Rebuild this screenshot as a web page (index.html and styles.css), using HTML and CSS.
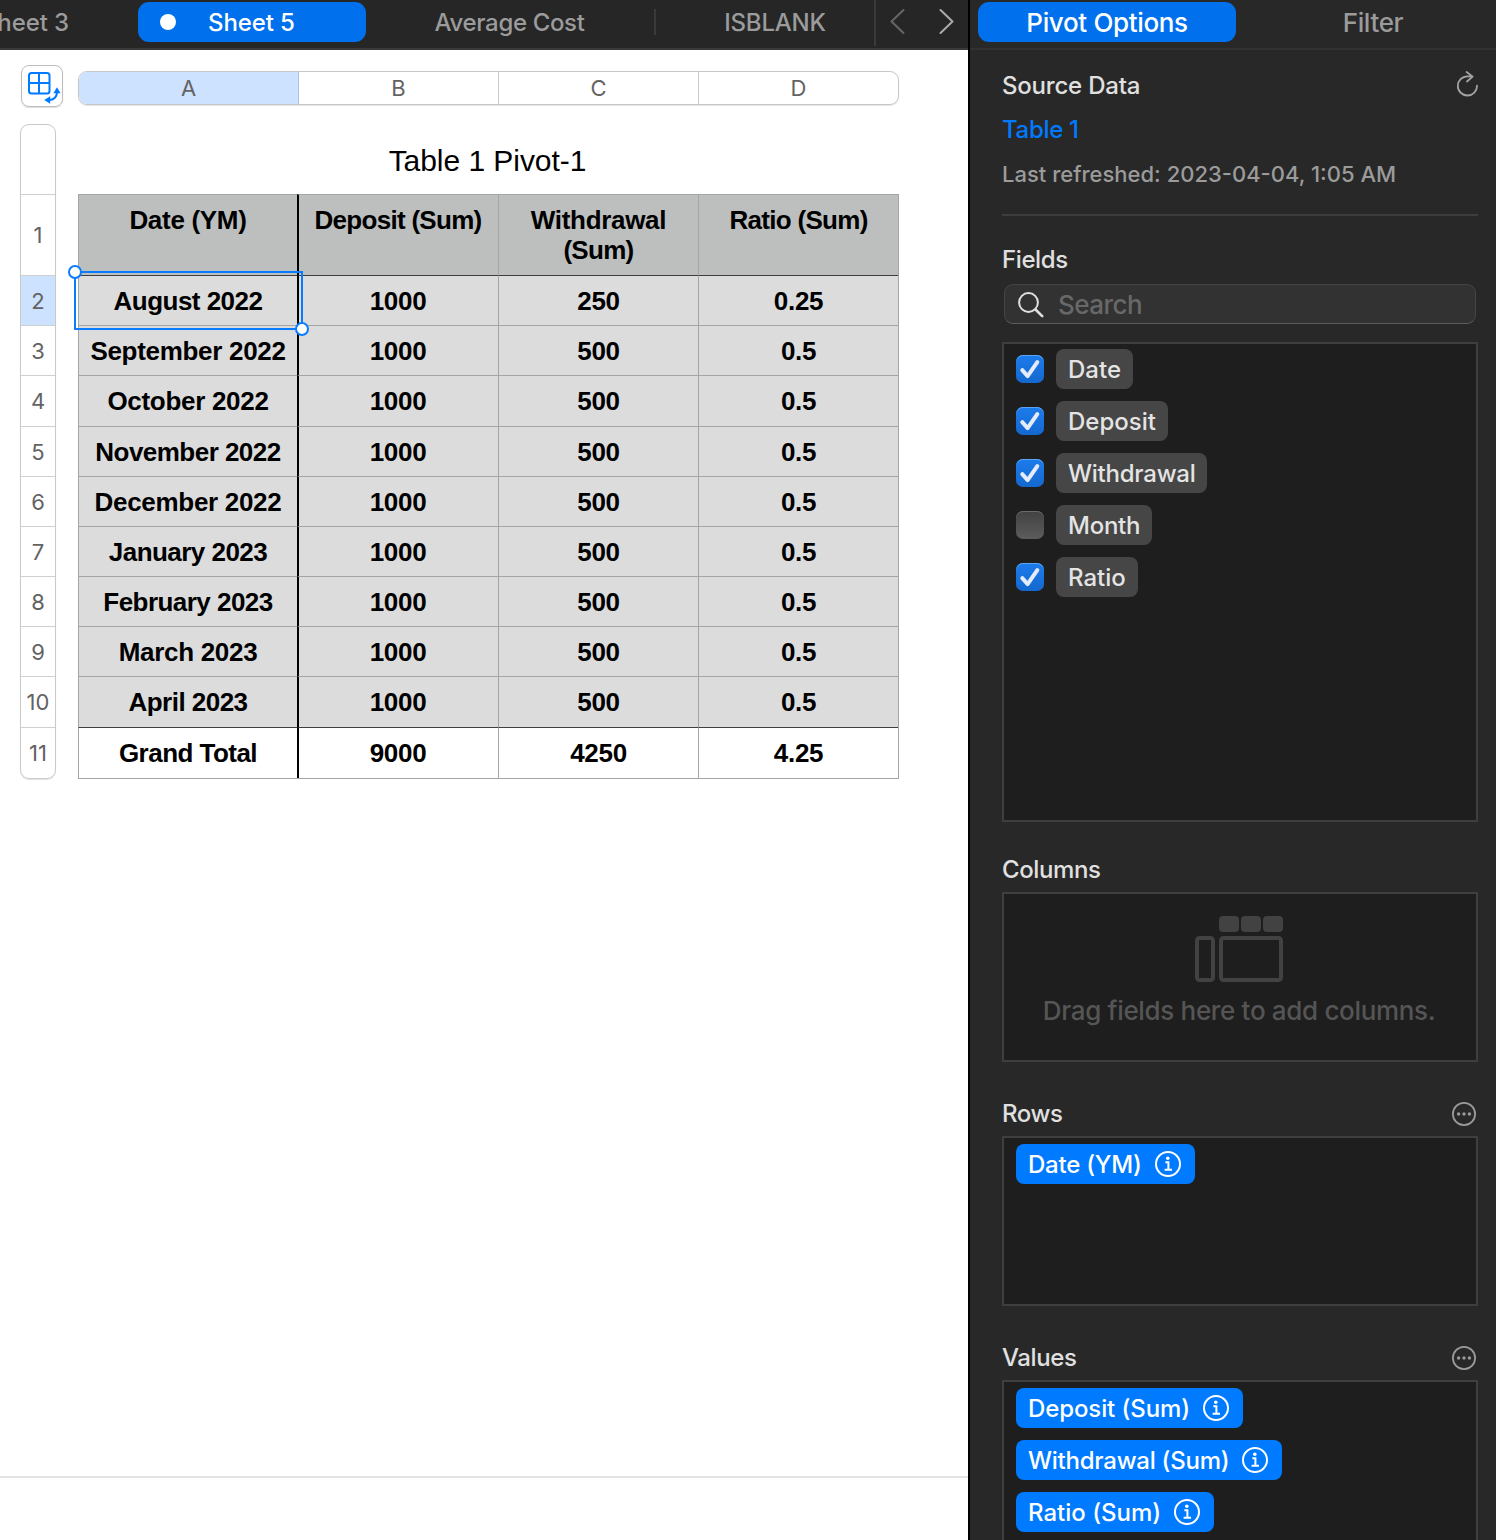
FILE: index.html
```html
<!DOCTYPE html>
<html lang="en">
<head>
<meta charset="utf-8">
<title>Pivot table</title>
<link rel="stylesheet" href="styles.css">
</head>
<body>
<svg class="defs" width="0" height="0">
  <symbol id="info" viewBox="0 0 26 26">
    <circle cx="13" cy="13" r="12" fill="none" stroke="#fff" stroke-width="2"/>
    <circle cx="12.8" cy="7.2" r="1.8" fill="#fff"/>
    <path d="M10.4 11.3h3v7.4M9.6 18.8h7.4" fill="none" stroke="#fff" stroke-width="2"/>
  </symbol>
  <symbol id="more" viewBox="0 0 24 24">
    <circle cx="12" cy="12" r="11.1" fill="none" stroke="#9b9b9b" stroke-width="1.8"/>
    <g fill="#9b9b9b"><circle cx="6.6" cy="12" r="1.7"/><circle cx="12" cy="12" r="1.7"/><circle cx="17.4" cy="12" r="1.7"/></g>
  </symbol>
  <symbol id="check" viewBox="0 0 28 28">
    <path d="M6.3 15.2l5.3 5.9L21.3 7.2" fill="none" stroke="#e4ecfb" stroke-width="4" stroke-linecap="round" stroke-linejoin="round"/>
  </symbol>
</svg>
<div class="app">
  <main class="document">
    <nav class="tabs">
      <div class="tab tab-first"><span>Sheet 3</span></div>
      <div class="tab tab-active"><i class="dot"></i><span>Sheet 5</span></div>
      <div class="tab tab-cost"><span>Average Cost</span></div>
      <div class="tab tab-blank"><span>ISBLANK</span></div>
      <div class="arrows">
        <svg width="92" height="46" viewBox="0 0 92 46" fill="none" stroke-width="2" stroke-linecap="round" stroke-linejoin="round"><path d="M27.5 10L15.5 21.5l12 11.5" stroke="#666"/><path d="M64.5 10l12 11.5L64.500 33" stroke="#aaa"/></svg>
      </div>
    </nav>
    <div class="canvas">
      <div class="col-head-row">
        <div class="pivot-btn">
          <svg width="42" height="42" viewBox="0 0 42 42" fill="none" stroke="#007aff" stroke-width="2">
            <rect x="8" y="8" width="20.5" height="20.5" rx="2.5"/><path d="M18 8v20M8 18h20.5"/>
            <path d="M36 27c0 4.500-3 8-8 8"/>
            <path d="M32.400 28.300l3.600-6 3.600 6zM29.200 31.300l-6 3.700 6 3.700z" fill="#007aff" stroke="none"/>
          </svg>
        </div>
        <div class="col-head">
          <div class="selected">A</div><div>B</div><div>C</div><div>D</div>
        </div>
      </div>
      <div class="sheet-row">
        <div class="row-head">
          <div></div><div>1</div><div class="selected">2</div><div>3</div><div>4</div><div>5</div><div>6</div><div>7</div><div>8</div><div>9</div><div>10</div><div>11</div>
        </div>
        <div class="pivot">
          <h1>Table 1 Pivot-1</h1>
          <div class="grid">
            <div class="row head"><b>Date (YM)</b><b class="tighter">Deposit (Sum)</b><b><span>Withdrawal<br><span class="tighter">(Sum)</span></span></b><b class="tighter">Ratio (Sum)</b></div>
            <div class="row first"><b class="tight">August 2022</b><b>1000</b><b>250</b><b>0.25</b></div>
            <div class="row"><b>September 2022</b><b>1000</b><b>500</b><b>0.5</b></div>
            <div class="row"><b>October 2022</b><b>1000</b><b>500</b><b>0.5</b></div>
            <div class="row"><b class="tight">November 2022</b><b>1000</b><b>500</b><b>0.5</b></div>
            <div class="row"><b>December 2022</b><b>1000</b><b>500</b><b>0.5</b></div>
            <div class="row"><b class="tight">January 2023</b><b>1000</b><b>500</b><b>0.5</b></div>
            <div class="row"><b class="tight">February 2023</b><b>1000</b><b>500</b><b>0.5</b></div>
            <div class="row"><b>March 2023</b><b>1000</b><b>500</b><b>0.5</b></div>
            <div class="row"><b class="tight">April 2023</b><b>1000</b><b>500</b><b>0.5</b></div>
            <div class="row total"><b class="tight">Grand Total</b><b>9000</b><b>4250</b><b>4.25</b></div>
            <div class="selection"><i class="handle start"></i><i class="handle end"></i></div>
          </div>
        </div>
      </div>
    </div>
    <div class="footer"></div>
  </main>
  <aside class="inspector">
    <nav class="modes">
      <div class="mode active">Pivot Options</div>
      <div class="mode">Filter</div>
    </nav>
    <div class="panel">
      <section class="source">
        <div class="heading"><span>Source Data</span>
          <svg width="24" height="28" viewBox="0 0 24 28" fill="none" stroke="#a3a3a3" stroke-width="1.8" stroke-linecap="round" stroke-linejoin="round"><path d="M23 14.700A9.600 9.600 0 1 1 13.400 5.300H18.600M12.600 1l6 4.600-5.600 4.900"/></svg>
        </div>
        <div class="link">Table 1</div>
        <div class="note">Last refreshed: 2023-04-04, 1:05 AM</div>
      </section>
      <section class="fields">
        <div class="heading"><span>Fields</span></div>
        <div class="search">
          <svg width="26" height="26" viewBox="0 0 26 26" fill="none" stroke="#e0e0e0" stroke-linecap="round"><circle cx="10.5" cy="10.5" r="9.400" stroke-width="2"/><path d="M17.500 17.500l6.700 6.700" stroke-width="2.600"/></svg>
          <span>Search</span>
        </div>
        <div class="box field-list">
          <div class="field"><i class="checkbox on"><svg width="28" height="28"><use href="#check"/></svg></i><div class="chip"><span>Date</span></div></div>
          <div class="field"><i class="checkbox on"><svg width="28" height="28"><use href="#check"/></svg></i><div class="chip"><span>Deposit</span></div></div>
          <div class="field"><i class="checkbox on"><svg width="28" height="28"><use href="#check"/></svg></i><div class="chip narrow"><span>Withdrawal</span></div></div>
          <div class="field"><i class="checkbox"></i><div class="chip narrow"><span>Month</span></div></div>
          <div class="field"><i class="checkbox on"><svg width="28" height="28"><use href="#check"/></svg></i><div class="chip"><span>Ratio</span></div></div>
        </div>
      </section>
      <section class="group">
        <div class="heading"><span>Columns</span></div>
        <div class="box empty">
          <svg width="88" height="66" viewBox="0 0 88 66"><g fill="#424242"><rect x="24" width="20" height="16" rx="4"/><rect x="46" width="20" height="16" rx="4"/><rect x="68" width="20" height="16" rx="4"/></g><g fill="none" stroke="#424242" stroke-width="4"><rect x="2" y="22" width="16" height="42" rx="2.500"/><rect x="26" y="22" width="60" height="42" rx="2.500"/></g></svg>
          <span>Drag fields here to add columns.</span>
        </div>
      </section>
      <section class="group">
        <div class="heading"><span>Rows</span><svg class="more" width="24" height="24"><use href="#more"/></svg></div>
        <div class="box">
          <div class="chip blue narrow"><span>Date (YM)</span><svg width="26" height="26"><use href="#info"/></svg></div>
        </div>
      </section>
      <section class="group">
        <div class="heading"><span>Values</span><svg class="more" width="24" height="24"><use href="#more"/></svg></div>
        <div class="box">
          <div class="chip blue slim"><span>Deposit (Sum)</span><svg width="26" height="26"><use href="#info"/></svg></div>
          <div class="chip blue narrow"><span>Withdrawal (Sum)</span><svg width="26" height="26"><use href="#info"/></svg></div>
          <div class="chip blue"><span>Ratio (Sum)</span><svg width="26" height="26"><use href="#info"/></svg></div>
        </div>
      </section>
    </div>
  </aside>
</div>
</body>
</html>
```
FILE: styles.css
```css
* { box-sizing: border-box; }
body { margin: 0; background: #fff; font-family: Inter, "Liberation Sans", sans-serif; }
.defs { position: absolute; }
.app { display: flex; width: 1496px; height: 1540px; overflow: hidden; }
svg { display: block; flex: none; }
span { white-space: nowrap; }

/* Document side */
.document { width: 968px; display: flex; flex-direction: column; overflow: hidden; }
.tabs { display: flex; height: 50px; background: #262626; border-bottom: 2px solid #3a393b; color: #9b9b9b; font-size: 24px; font-weight: 500; line-height: 42px; padding-top: 2px; letter-spacing: -0.1px; }
.tab { display: flex; justify-content: center; height: 40px; }
.tab-first { width: 138px; justify-content: flex-end; padding-right: 69px; }
.tab-active { width: 228px; background: #0070ec; color: #fff; border-radius: 11px; justify-content: flex-start; padding-left: 22px; gap: 32px; }
.dot { width: 16px; height: 16px; margin-top: 12px; border-radius: 50%; background: #fff; }
.tab-cost { width: 289px; letter-spacing: -0.35px; padding-right: 2px; }
.tab-blank { width: 219px; padding-left: 21px; position: relative; letter-spacing: -0.2px; }
.tab-blank::before { content: ""; position: absolute; left: -1px; top: 7px; width: 2px; height: 26px; background: #3a3a3a; }
.arrows { width: 94px; height: 46px; margin-top: -2px; border-left: 2px solid #3a3a3a; }

.canvas { flex: 1; padding: 15px 0 0 20px; }
.col-head-row { display: flex; padding-left: 1px; gap: 15px; align-items: flex-start; }
.pivot-btn { width: 42px; height: 42px; border: 1px solid #bdbdbd; border-radius: 8px; box-shadow: 0 1px 1px #ddd; }
.pivot-btn svg { margin: -1px; }
.col-head { display: grid; grid-template-columns: 220px 200px 200px 199px; width: 821px; height: 34px; margin-top: 6px; border: 1px solid #c6c6c6; border-radius: 9px; overflow: hidden; box-shadow: 0 1px 1px #e4e4e4; color: #636363; font-size: 22px; line-height: 33px; text-align: center; }
.col-head div { border-right: 1px solid #cacaca; height: 32px; }
.col-head div:last-child { border-right: 0; }
.col-head .selected { background: #cce2ff; border-color: #a9c3e3; }
.sheet-row { display: flex; gap: 22px; padding-top: 17px; }
.row-head { display: grid; grid-template-rows: 70px 81px 50px 50px 51px repeat(5, 50px) 51px 51px; width: 36px; height: 655px; border: 1px solid #c9c9c9; border-radius: 9px; overflow: hidden; box-shadow: 0 1px 1px #e4e4e4; color: #636363; font-size: 22px; }
.row-head div { border-bottom: 1px solid #cfcfcf; display: flex; align-items: center; justify-content: center; }
.row-head div:last-child { border: 0; padding-bottom: 2px; }
.row-head .selected { background: #cce2ff; }
.pivot { width: 821px; }
.pivot h1 { margin: 0; height: 70px; padding: 19px 2px 0 0; text-align: center; font: 400 30px/36px "Liberation Sans", sans-serif; letter-spacing: -0.05px; color: #000; }
.grid { display: grid; grid-template-rows: 81px 50px 50px 51px repeat(5, 50px) 51px 51px; position: relative; font: 700 26px/30px "Liberation Sans", sans-serif; letter-spacing: -0.3px; color: #000; border-bottom: 1px solid #a5a5a5; border-right: 1px solid #a5a5a5; }
.row { display: grid; grid-template-columns: 219px 201px 200px 200px; }
.row b { display: flex; justify-content: center; padding: 10px 0 0; background: #dcdcdc; border-top: 1px solid #a5a5a5; border-left: 1px solid #a5a5a5; text-align: center; }
.row b:nth-child(2) { border-left: 2px solid #000; padding-right: 1px; }
.row .tight { letter-spacing: -0.53px; }
.row .tighter { letter-spacing: -0.7px; }
.row.head b { background: #bdbfbe; }
.row.first b, .row.total b { border-top-color: #3f3f3f; }
.row.total b { background: #fff; }
.selection { position: absolute; left: -4px; top: 77px; width: 229px; height: 59px; border: 2px solid #0a7cff; }
.handle { position: absolute; width: 14px; height: 14px; border-radius: 50%; background: #fff; border: 2px solid #0a7cff; }
.handle.start { left: -8px; top: -8px; }
.handle.end { right: -8px; bottom: -8px; }
.footer { height: 64px; border-top: 2px solid #e4e4e4; }

/* Inspector side */
.inspector { width: 528px; border-left: 2px solid #000; background: #282828; color: #e0e0e0; font-weight: 500; }
.modes { display: flex; gap: 8px; height: 50px; padding: 2px 0 0 8px; border-bottom: 2px solid #323232; font-size: 26px; line-height: 42px; letter-spacing: -0.35px; }
.mode { flex: none; width: 258px; height: 40px; text-align: center; color: #9b9b9b; }
.mode.active { background: #0070ec; color: #fff; border-radius: 11px; }
.panel { padding: 21px 18px 0 32px; font-size: 24px; line-height: 30px; }
.heading { display: flex; justify-content: space-between; height: 30px; letter-spacing: -0.4px; }
.source { height: 145px; border-bottom: 2px solid #3d3d3d; }
.source .heading { letter-spacing: -0.2px; }
.link { color: #007aff; margin-top: 14px; letter-spacing: -0.3px; }
.note { color: #9b9b9b; font-size: 22px; margin-top: 14px; }
.fields { padding-top: 29px; }
.search { display: flex; align-items: center; gap: 14px; height: 40px; margin: 9px 2px 18px; padding-left: 13px; border: 1px solid #454545; border-bottom-color: #5d5d5d; border-radius: 9px; background: #323232; color: #686868; font-size: 26px; letter-spacing: -0.55px; }
.search svg { margin-top: 1px; }
.search span { padding-top: 2px; }
.box { border: 2px solid #3f3f3f; background: #1e1e1e; height: 170px; padding: 6px 12px; display: flex; flex-direction: column; align-items: flex-start; gap: 12px; }
.field-list { height: 480px; padding-top: 5px; }
.field { display: flex; align-items: center; gap: 12px; }
.checkbox { width: 28px; height: 28px; border-radius: 7px; background: linear-gradient(#424242, #5c5c5c); box-shadow: inset 0 1px 0 #6a6a6a; }
.checkbox.on { background: linear-gradient(#1c7cec, #1468cf); box-shadow: inset 0 1px 0 #5ca4f4; }
.chip { height: 40px; display: flex; align-items: center; padding: 1px 12px 0; border-radius: 8px; background: #464646; color: #e4e4e4; }
.chip.blue { background: #007aff; color: #fff; gap: 13px; padding-right: 14px; }
.chip.blue svg { margin-top: -1px; }
.chip.narrow { letter-spacing: -0.25px; }
.chip.slim { letter-spacing: -0.1px; }
.group { padding-top: 37px; }
.fields + .group { padding-top: 33px; }
.group .heading { height: 37px; }
.more { margin: 3px 2px 0 0; }
.empty { align-items: center; padding: 22px 14px 0 12px; gap: 14px; color: #555; font-size: 26px; letter-spacing: -0.33px; }
```
